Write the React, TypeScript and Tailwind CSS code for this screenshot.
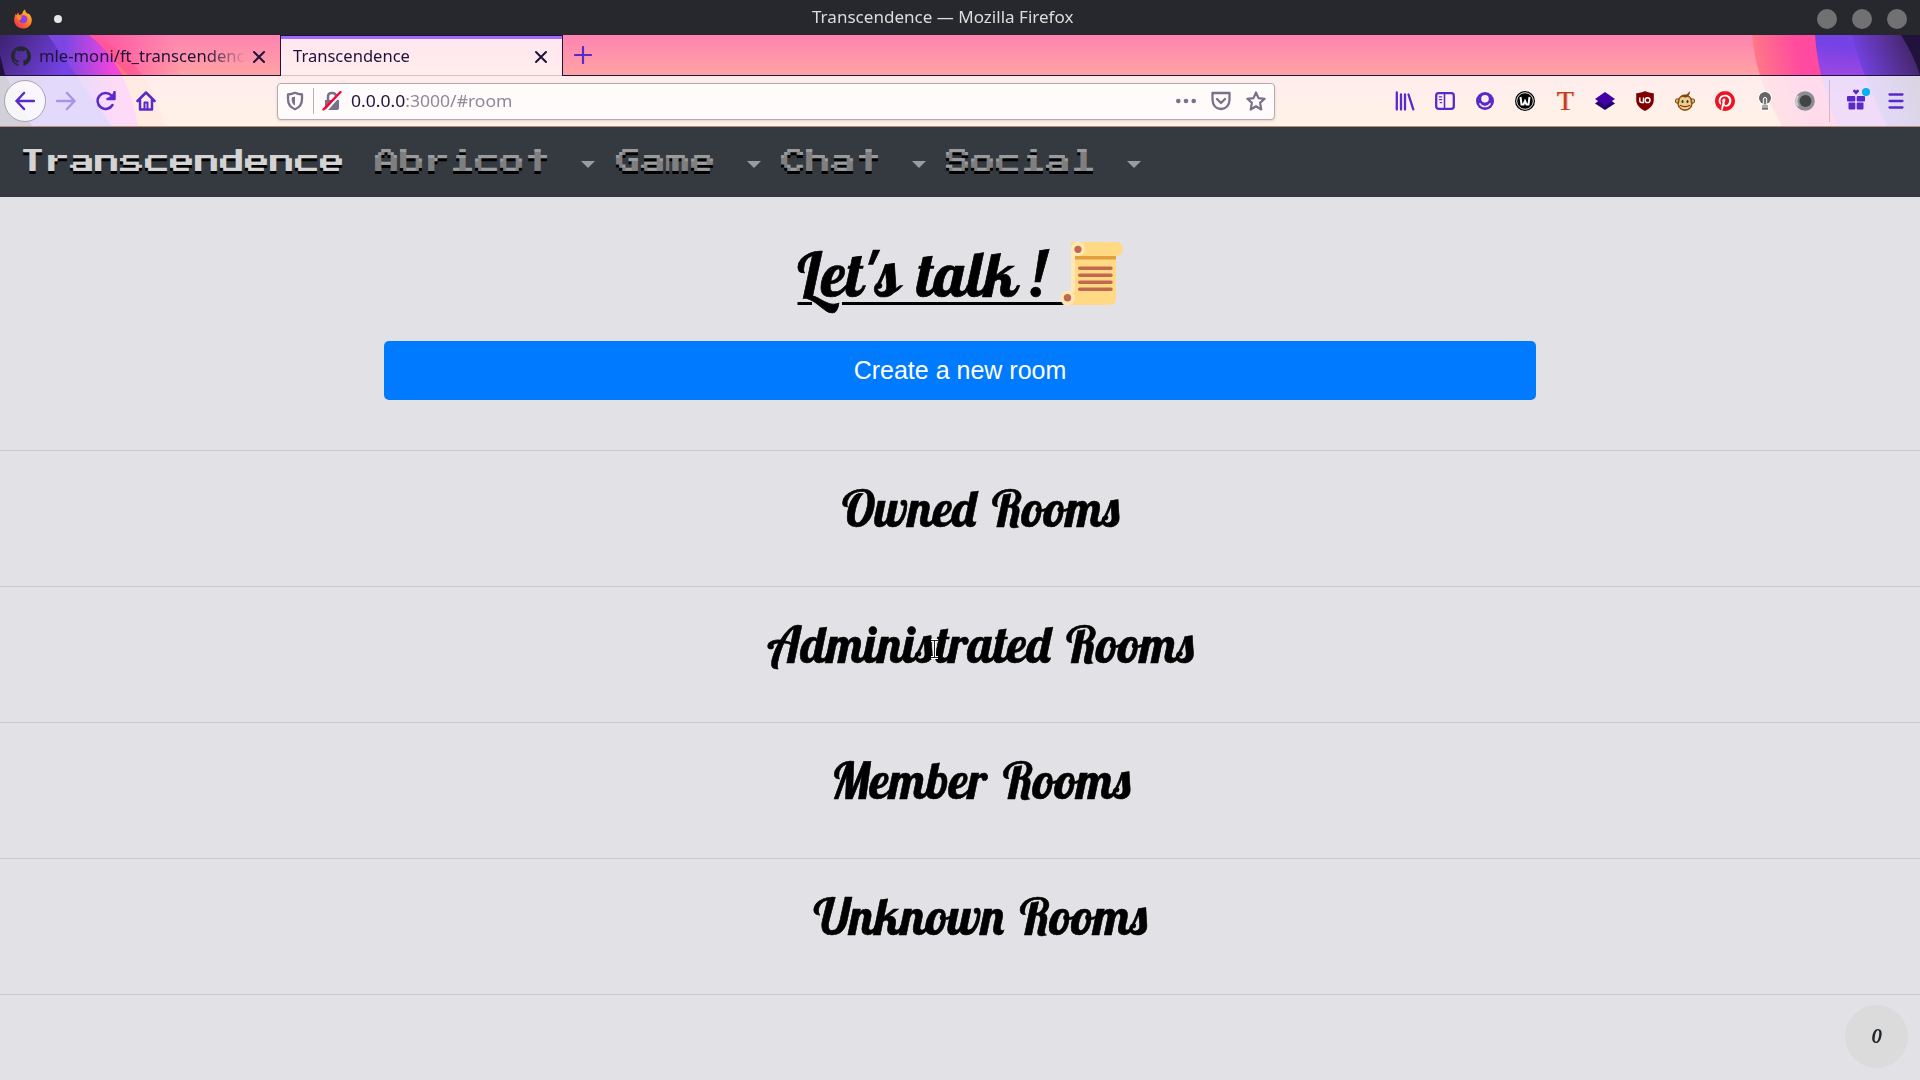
import { useLayoutEffect, useRef } from "react";
import type { ReactNode } from "react";
import { SiGithub, SiPinterest } from "react-icons/si";

/** Stretches or condenses a line of text horizontally to fill its container's width. */
function Fit({ children, className }: { children: ReactNode; className: string }) {
  const box = useRef<HTMLSpanElement>(null);
  const text = useRef<HTMLSpanElement>(null);
  useLayoutEffect(() => {
    if (box.current && text.current) {
      text.current.style.transform = `scaleX(${box.current.clientWidth / text.current.offsetWidth})`;
    }
  }, []);
  return (
    <span ref={box} className={`block shrink-0 whitespace-nowrap ${className}`}>
      <span ref={text} className="inline-block origin-left">
        {children}
      </span>
    </span>
  );
}

function FirefoxLogo() {
  return (
    <svg className="h-[20px] w-[20px]" viewBox="0 0 20 20">
      <defs>
        <linearGradient id="ff" x1="1" y1="0" x2="0.2" y2="1">
          <stop offset="0" stopColor="#ffd43a" />
          <stop offset="0.45" stopColor="#ff8a1f" />
          <stop offset="1" stopColor="#f5304f" />
        </linearGradient>
      </defs>
      <path d="M10 19.5C4.800 19.5 1.200 15.800 1.200 11 1.200 8 2 6 3 4.500L3.500 6.200 5.200 3.200 6 6C8 5.500 9 5.200 9.200 4.500 9.500 3 10.500 1.500 12 .5 12.200 3 13.500 3.500 15 5L15.800 4.500C18 7 18.800 9 18.800 11.200 18.800 16 15 19.500 10 19.500Z" fill="url(#ff)" />
      <circle cx="10.300" cy="10.300" r="4" fill="#8f3fe8" />
      <path d="M3.500 6.500C6 5.500 8.500 7 9.500 8.200 8 8.300 7.500 9.500 8 10.500 6 12 3.500 10 3.500 6.500Z" fill="#ff8c22" />
    </svg>
  );
}

function ThemeArt() {
  return (
    <svg className="absolute inset-0 h-[91px] w-[1920px]" viewBox="0 35 1920 91" preserveAspectRatio="none">
      <defs>
        <linearGradient id="base" x1="0" y1="0" x2="0" y2="1">
          <stop offset="0" stopColor="#ff83b1" />
          <stop offset="0.45" stopColor="#ffa4a4" />
          <stop offset="1" stopColor="#ffbd85" />
        </linearGradient>
        <linearGradient id="lpink" gradientUnits="userSpaceOnUse" x1="92" y1="50" x2="165" y2="20">
          <stop offset="0" stopColor="#ff4f9e" />
          <stop offset="1" stopColor="#ff4f9e" stopOpacity="0" />
        </linearGradient>
        <linearGradient id="lorange" gradientUnits="userSpaceOnUse" x1="120" y1="60" x2="165" y2="50">
          <stop offset="0" stopColor="#ff7a75" />
          <stop offset="1" stopColor="#ff8a80" stopOpacity="0" />
        </linearGradient>
        <linearGradient id="ldark" gradientUnits="userSpaceOnUse" x1="0" y1="35" x2="60" y2="75">
          <stop offset="0" stopColor="#3c2270" />
          <stop offset="1" stopColor="#7542e5" />
        </linearGradient>
        <linearGradient id="lviolet" gradientUnits="userSpaceOnUse" x1="65" y1="65" x2="115" y2="65">
          <stop offset="0" stopColor="#7d46e3" />
          <stop offset="1" stopColor="#f545dc" />
        </linearGradient>
        <linearGradient id="rpink" gradientUnits="userSpaceOnUse" x1="1752" y1="70" x2="1800" y2="60">
          <stop offset="0" stopColor="#ff7d84" />
          <stop offset="1" stopColor="#ff4a9f" />
        </linearGradient>
        <linearGradient id="rviolet" gradientUnits="userSpaceOnUse" x1="1840" y1="45" x2="1835" y2="95">
          <stop offset="0" stopColor="#7542e5" />
          <stop offset="1" stopColor="#b54be0" />
        </linearGradient>
        <linearGradient id="rdark" gradientUnits="userSpaceOnUse" x1="1858" y1="65" x2="1908" y2="45">
          <stop offset="0" stopColor="#7542e5" />
          <stop offset="1" stopColor="#46286f" />
        </linearGradient>
      </defs>
      <rect x="0" y="35" width="1920" height="91" fill="url(#base)" />
      <path d="M0 35H180V75H0Z" fill="url(#lpink)" />
      <path d="M88 35Q150 60 165 126H0V35Z" fill="url(#lorange)" />
      <path d="M88 35Q128 50 142 75H128Z" fill="url(#lpink)" />
      <path d="M100 75H142Q158 97 165 126H100Z" fill="#ff9b70" />
      <path d="M0 35H89Q128 65 138 126H0Z" fill="url(#lviolet)" />
      <path d="M0 35H48L76 75 112 126H0Z" fill="url(#ldark)" />
      <path d="M0 55L5 75 32 126H0Z" fill="#20123a" />
      <path d="M1752 35Q1756 80 1782 126H1920V35Z" fill="url(#rpink)" />
      <path d="M1815 35Q1818 80 1838 126H1920V35Z" fill="url(#rviolet)" />
      <path d="M1852 35Q1862 75 1887 126H1920V35Z" fill="url(#rdark)" />
      <path d="M1901 35Q1914 55 1920 75V35Z" fill="#20123a" />
    </svg>
  );
}

function CloseIcon() {
  return (
    <svg className="h-[14px] w-[14px] shrink-0" viewBox="0 0 14 14" fill="none" stroke="#20123a" strokeWidth="2" strokeLinecap="round">
      <path d="M2 2L12 12M12 2L2 12" />
    </svg>
  );
}

function Slot({ children, className = "w-10" }: { children: ReactNode; className?: string }) {
  return <div className={`flex h-full shrink-0 items-center justify-center ${className}`}>{children}</div>;
}

const line = { fill: "none", stroke: "#592acb", strokeWidth: 2.5, strokeLinecap: "round", strokeLinejoin: "round" } as const;

function Extensions() {
  return (
    <>
      <Slot>
        <svg className="h-5 w-5" viewBox="0 0 20 20" {...line}><path d="M1.800 1.500V18.500M6 3.500V18.500M10 3.500V18.500M13.500 3.500L18.300 18.300" strokeWidth="2.300" /></svg>
      </Slot>
      <Slot>
        <svg className="h-5 w-5" viewBox="0 0 20 20" {...line}><rect x="1.200" y="2.200" width="17.600" height="15.600" rx="2.500" strokeWidth="2.300" /><path d="M9.500 2.500V17.500" strokeWidth="1.600" /><path d="M4.300 5.800H6.700M4.300 8.700H6.700M5.200 11.600H6.700" strokeWidth="1.200" /></svg>
      </Slot>
      <Slot>
        <svg className="h-5 w-5" viewBox="0 0 20 20"><circle cx="10" cy="10" r="9" fill="#592acb" /><circle cx="10" cy="7.800" r="3.800" fill="#ffece9" /><path d="M4.500 12.300Q6.500 15.600 10 15.600T15.500 12.300" fill="none" stroke="#ffece9" strokeWidth="1.400" /></svg>
      </Slot>
      <Slot>
        <svg className="h-5 w-5" viewBox="0 0 20 20"><circle cx="10" cy="10" r="10" fill="#000" /><circle cx="10" cy="10" r="8.300" fill="none" stroke="#fff" strokeWidth="0.900" /><path d="M5.500 6L6.500 13.500H8.500L10 10 11.500 13.500H13.500L14.500 6" fill="none" stroke="#fff" strokeWidth="2" /></svg>
      </Slot>
      <Slot>
        <span className="font-['Liberation_Serif'] text-[28px] leading-5 text-[#c83a22] [text-shadow:1px_0_0_#d98d78]">T</span>
      </Slot>
      <Slot>
        <svg className="h-5 w-5" viewBox="0 0 20 20"><path d="M0 12.500L4 9.500H16L20 12.500 10 19Z" fill="#20006b" /><path d="M10 1L20 8 10 14.800 0 8Z" fill="#4300a8" /></svg>
      </Slot>
      <Slot>
        <svg className="h-5 w-5" viewBox="0 0 20 20"><path d="M10 0C13 1.500 15.500 2 18.800 2.300V9C18.800 14 15 17.500 10 20 5 17.500 1.200 14 1.200 9V2.300C4.500 2 7 1.500 10 0Z" fill="#800000" /><path d="M4.800 6.500V9.500Q4.800 11.500 6.800 11.500H8.500V6.500" fill="none" stroke="#fff" strokeWidth="1.400" /><circle cx="12.600" cy="9.200" r="2.400" fill="none" stroke="#fff" strokeWidth="1.400" /></svg>
      </Slot>
      <Slot>
        <svg className="h-5 w-5" viewBox="0 0 20 20"><circle cx="2.500" cy="10" r="2.200" fill="#e5b76b" stroke="#7a4310" /><circle cx="17.500" cy="10" r="2.200" fill="#e5b76b" stroke="#7a4310" /><path d="M10 4C14 4 16.500 6.500 16.500 9.500 18.500 15 15 19.300 10 19.300S1.500 15 3.500 9.500C3.500 6.500 6 4 10 4Z" fill="#a5641c" stroke="#7a4310" /><path d="M10 6.500C12 5 15.800 6.500 15.300 10 17.500 14.500 14 18.300 10 18.300S2.500 14.500 4.700 10C4.200 6.500 8 5 10 6.500Z" fill="#f0cd8c" /><path d="M7 5C10 5 13 4 14.500 .8 14.500 4 12.500 5.500 11 6Z" fill="#7a4310" stroke="#7a4310" strokeWidth="0.800" /><ellipse cx="7.500" cy="10.500" rx="1" ry="1.600" fill="#123d2d" /><ellipse cx="12.500" cy="10.500" rx="1" ry="1.600" fill="#123d2d" /><path d="M5 14.300Q10 16.800 15 14.300" fill="none" stroke="#8c2e15" strokeWidth="1.200" /></svg>
      </Slot>
      <Slot>
        <span className="flex h-5 w-5 items-center justify-center rounded-full bg-white">
          <SiPinterest className="h-5 w-5 text-[#ee1323]" />
        </span>
      </Slot>
      <Slot>
        <svg className="h-5 w-5" viewBox="0 0 20 20"><path d="M10 0C14 0 17 2.800 17 6.600 17 9.800 14.700 12 13.500 13.500V19.500H6.500V13.500C5.300 12 3 9.800 3 6.600 3 2.800 6 0 10 0Z" fill="#fff" /><circle cx="10" cy="6.900" r="6" fill="#666" /><path d="M8.300 13.500V8Q8.300 6.500 10 6.500T11.700 8V13.500" fill="#777" stroke="#fff" strokeWidth="1" /><rect x="7" y="14" width="6" height="4.800" fill="#aaa" /><path d="M7 17.800H13" stroke="#555" /></svg>
      </Slot>
      <Slot>
        <svg className="h-5 w-5" viewBox="0 0 20 20"><circle cx="10" cy="10" r="9.800" fill="#8b8d8e" /><path d="M4.500 4.500Q2.500 7 2.500 10T4.500 15.500L1.500 14.500Q-.8 10 1.500 5Z" fill="#c9cccc" /><circle cx="10.500" cy="10" r="6" fill="#444" /></svg>
      </Slot>
    </>
  );
}

function NavItem({ label, margin }: { label: string; margin: string }) {
  return (
    <div className={`flex items-center ${margin}`}>
      <span className="text-white/50">{label}</span>
      <svg className="ml-[31px] mr-px mt-1 h-[7px] w-[14px]" viewBox="0 0 14 7"><path d="M0 0H14L7 7Z" fill="#9a9c9f" /></svg>
    </div>
  );
}

const sections = ["Owned Rooms", "Administrated Rooms", "Member Rooms", "Unknown Rooms"];

function Scroll() {
  return (
    <svg className="h-[64px] w-[64px] shrink-0" viewBox="0 0 64 64">
      <path d="M11 7H56V56Q56 63 49 63H7V50H11Z" fill="#ffd983" />
      <path d="M11 0H56A7 7 0 0 1 56 14H15V50H11Z" fill="#ffd983" />
      <path d="M15 14H56V17.500H15Z" fill="#e39f3d" />
      <path d="M11 7V50H15V7Z" fill="#ffe8b6" />
      <circle cx="18" cy="7" r="7" fill="#ffe8b6" />
      <circle cx="18" cy="7.300" r="3.600" fill="#c1694f" />
      <circle cx="7.500" cy="56" r="7.300" fill="#ffe8b6" />
      <circle cx="7.500" cy="55.700" r="3.700" fill="#c1694f" />
      <path d="M19.700 26.300H51M19.700 33.300H51M19.700 40.300H51M19.700 47.300H51" stroke="#c1694f" strokeWidth="3.500" strokeLinecap="round" />
    </svg>
  );
}

export default function App() {
  return (
    <div className="flex h-[1080px] w-[1920px] flex-col overflow-hidden bg-[#e2e2e6] font-['Noto_Sans',sans-serif] text-[#20123a]">
      <header className="relative flex h-[35px] shrink-0 items-center justify-between bg-[#27282d] pl-[13px] pr-[13px]">
        <div className="flex items-center gap-[21px] pt-[2px]">
          <FirefoxLogo />
          <span className="h-2 w-2 rounded-full bg-[#e6e6e6]" />
        </div>
        <div className="absolute left-[812px] top-[5px] leading-6 text-[#dcdcdc]">
          <Fit className="w-[261px] text-[16px]">Transcendence — Mozilla Firefox</Fit>
        </div>
        <div className="flex gap-[15px] pt-[3px]">
          <span className="h-5 w-5 rounded-full bg-[#717173]" />
          <span className="h-5 w-5 rounded-full bg-[#717173]" />
          <span className="h-5 w-5 rounded-full bg-[#717173]" />
        </div>
      </header>

      <div className="relative h-[92px] shrink-0 bg-[#b98d7d]">
        <ThemeArt />
        <div className="relative flex h-[41px]">
          <div className="flex w-[280px] items-center border-b border-[#20123a] pl-[11px] pr-[14px] pt-[3px]">
            <SiGithub className="-mt-px h-5 w-5 shrink-0 text-[#24292e]" />
            <div className="ml-2 w-[208px] overflow-hidden whitespace-nowrap text-[16px] leading-6 [mask-image:linear-gradient(90deg,#000_80%,transparent)]">
              <Fit className="-mt-px w-[215px]">mle-moni/ft_transcendence</Fit>
            </div>
            <div className="ml-auto"><CloseIcon /></div>
          </div>
          <div className="flex w-[283px] items-center justify-between border-x border-t border-[#20123a] bg-white/80 pl-[12px] pr-[14px] shadow-[inset_0_3px_0_#a16bff,inset_0_-1px_0_#d6c3cc]">
            <Fit className="w-[117px] text-[16px] leading-6">Transcendence</Fit>
            <div className="pt-[2px]"><CloseIcon /></div>
          </div>
          <div className="flex flex-1 items-center border-b border-[#20123a] pl-[11px]">
            <svg className="h-[18px] w-[18px]" viewBox="0 0 18 18" {...line} strokeWidth="2.200"><path d="M9 1V17M1 9H17" /></svg>
          </div>
        </div>

        <div className="relative flex h-[50px] items-center bg-white/80">
          <div className="ml-1 flex h-[42px] w-[42px] shrink-0 items-center justify-center rounded-full border border-[#a9a1b0] bg-white/80">
            <svg className="h-5 w-5" viewBox="0 0 20 20" {...line}><path d="M19 10H1.500M9 2L1.500 10 9 18" /></svg>
          </div>
          <Slot><svg className="h-5 w-5 opacity-40" viewBox="0 0 20 20" {...line}><path d="M1 10H18.500M11 2L18.500 10 11 18" /></svg></Slot>
          <Slot><svg className="h-5 w-5" viewBox="0 0 20 20" {...line}><path d="M16.500 14A8 8 0 1 1 15.500 4.500" /><path d="M18.500 1V8H11.500" /><path d="M18 2V7H13Z" fill="#592acb" strokeWidth="1" /></svg></Slot>
          <Slot><svg className="h-5 w-5" viewBox="0 0 20 20" {...line}><path d="M1.500 10L10 1.500 18.500 10M4 9V18.500H16V9" /><path d="M8.500 18V11.500H11.500V18" strokeWidth="2" /></svg></Slot>

          <div className="ml-[111px] flex h-[37px] w-[998px] shrink-0 items-center rounded border border-[#b6a9b3] bg-[#fffbfa] pl-[7px] pr-[8px] shadow-sm">
            <svg className="h-5 w-5" viewBox="0 0 20 20" fill="none" stroke="#79718a" strokeWidth="2.300" strokeLinejoin="round"><path d="M3 3.500Q7 3.200 10 1.800 13 3.200 17 3.500V8Q17 15.500 10 18.300 3 15.500 3 8Z" /><path d="M10 5.500V14.500Q6.500 12.500 6.700 8.500V6.500Z" fill="#79718a" stroke="none" /></svg>
            <span className="ml-2 h-[26px] w-px bg-[#b8b0ba]" />
            <svg className="ml-2 h-5 w-5" viewBox="0 0 20 20"><path d="M3 9H17V17Q17 19 15 19H5Q3 19 3 17Z" fill="#79718a" /><path d="M6 9V5.500Q6 2 10 2T14 5.500V9" fill="none" stroke="#79718a" strokeWidth="2.500" /><path d="M18.500 3.500L4 20" stroke="#fffbfa" strokeWidth="2" /><path d="M18.500 1L1.500 18.500" stroke="#ff0039" strokeWidth="2.400" strokeLinecap="round" /></svg>
            <Fit className="ml-[9px] w-[161px] text-[17px] leading-6">0.0.0.0<span className="text-[#8f8999]">:3000/#room</span></Fit>
            <svg className="ml-auto h-5 w-5" viewBox="0 0 20 20" fill="#79718a"><circle cx="2.300" cy="10" r="2.300" /><circle cx="10" cy="10" r="2.300" /><circle cx="17.700" cy="10" r="2.300" /></svg>
            <svg className="ml-[15px] h-5 w-5" viewBox="0 0 20 20" fill="none" stroke="#79718a" strokeWidth="2.300" strokeLinejoin="round" strokeLinecap="round"><path d="M1.500 2H18.500V9Q18 17.500 10 18 2 17.500 1.500 9Z" /><path d="M6 8L10 12 14 8" /></svg>
            <svg className="ml-[15px] h-5 w-5" viewBox="0 0 20 20" fill="none" stroke="#79718a" strokeWidth="2.200" strokeLinejoin="round"><path d="M10 1.500L12.500 7.100 18.600 7.800 14.100 11.900 15.300 18.500 10 15.300 4.700 18.500 5.900 11.900 1.400 7.800 7.500 7.100Z" /></svg>
          </div>

          <div className="ml-[110px] flex h-full items-center">
            <Extensions />
            <span className="ml-1 h-[42px] w-px bg-[#cdb9ce]" />
            <Slot className="ml-[6px] w-10">
              <svg className="mb-1 h-6 w-6 overflow-visible" viewBox="0 0 24 24"><g fill="#592acb"><rect x="3" y="9" width="8.300" height="5.500" rx="1" /><rect x="12.700" y="9" width="8.300" height="5.500" rx="1" /><rect x="4.500" y="15.500" width="6.800" height="7" rx="1" /><rect x="12.700" y="15.500" width="6.800" height="7" rx="1" /><path d="M12 7.800L9 4.500Q8.800 2.500 10.500 2.400L12 3.500 13.500 2.400Q15.200 2.500 15 4.500Z" /></g><circle cx="22" cy="5" r="4" fill="#00b3f4" /></svg>
            </Slot>
            <Slot>
              <svg className="h-5 w-5" viewBox="0 0 20 20" {...line} strokeWidth="2.300"><path d="M3.500 3.500H16.500M3.500 10H16.500M3.500 16.500H16.500" /></svg>
            </Slot>
          </div>
        </div>
      </div>

      <nav className="flex h-[70px] shrink-0 items-center bg-[#343a40] pl-5 font-['Press_Start_2P','DejaVu_Sans_Mono',monospace] text-[25px] leading-10 [text-shadow:0_3px_0_#000]">
        <span className="text-[#d3d3d3]">Transcendence</span>
        <NavItem label="Abricot" margin="ml-[30px]" />
        <NavItem label="Game" margin="ml-[20px]" />
        <NavItem label="Chat" margin="ml-[19px]" />
        <NavItem label="Social" margin="ml-[19px]" />
      </nav>

      <main className="relative flex flex-1 flex-col text-black">
        <div className="flex h-[253px] shrink-0 flex-col items-center">
          <h1 className="mt-9 flex h-[108px] font-['Lobster','Liberation_Serif',serif] text-[62.5px] leading-[82px]">
            <span className="w-[263px] whitespace-pre pl-px tracking-[0.5px] underline decoration-[3px] underline-offset-[5px] [-webkit-text-stroke:0.7px_#000] [word-spacing:2.500px]">
              {"Let's talk"}
              <span className="-ml-[7px] [word-spacing:4px]">{" ! "}</span>
            </span>
            <div className="pt-[9px]"><Scroll /></div>
          </h1>
          <button className="h-[59px] w-[1152px] rounded-[5px] bg-[#007bff] font-['Liberation_Sans',sans-serif] text-[25px] text-white">Create a new room</button>
        </div>
        {sections.map((name) => (
          <section key={name} className="h-[136px] shrink-0 border-t border-[#cacace] pl-[41px] pt-[20px]">
            <h2 className="text-center font-['Lobster','Liberation_Serif',serif] text-[50px] leading-[76px] [-webkit-text-stroke:0.6px_#000] [word-spacing:5px]">{name}</h2>
          </section>
        ))}
        <div className="border-t border-[#cacace]" />
        <svg className="absolute left-[930px] top-[442px] h-[20px] w-[9px]" viewBox="0 0 9 20" fill="none"><path d="M1 1.500H8M1 18.500H8M4.500 1.500V18.500" stroke="#fff" strokeWidth="3" /><path d="M1 1.500H8M1 18.500H8M4.500 1.500V18.500" stroke="#222" strokeWidth="1" /></svg>
        <div className="absolute bottom-3 right-3 flex h-[63px] w-[63px] items-center justify-center rounded-full bg-[#dbdbdb] font-['Noto_Serif',serif] text-[20px] font-bold italic text-[#212529]">
          <span className="-mt-0.5 scale-x-90">0</span>
        </div>
      </main>
    </div>
  );
}
